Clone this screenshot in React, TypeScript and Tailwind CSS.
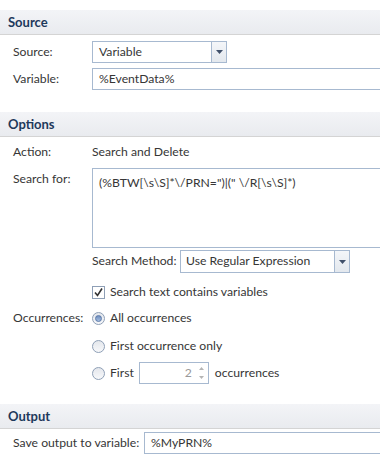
import React from "react";

const Header = ({ title }: { title: string }) => (
  <div className="h-[25px] bg-gradient-to-b from-[#f3f4f7] to-[#e9ebef] border-b border-[#d4d4d4] flex items-center pl-[8px] font-bold text-[#1e395b] text-[13px]">
    {title}
  </div>
);

const Arrow = () => (
  <div className="w-[15px] h-full border-l border-[#a7b9d0] bg-gradient-to-b from-[#f4f6f9] to-[#e3e8ee] flex items-center justify-center">
    <svg width="7" height="4" viewBox="0 0 7 4">
      <path d="M0 0 H7 L3.5 4 Z" fill="#40506a" />
    </svg>
  </div>
);

const Radio = ({ checked }: { checked?: boolean }) => (
  <div className="w-[13px] h-[13px] shrink-0 rounded-full border border-[#8e9fb6] bg-gradient-to-b from-[#e4e7ec] to-[#f7f8fa] flex items-center justify-center">
    {checked && (
      <div className="w-[7px] h-[7px] rounded-full bg-gradient-to-b from-[#6f8fbf] to-[#a4bde0] border border-[#5a78a8]" />
    )}
  </div>
);

export default function App() {
  return (
    <div className="w-[380px] h-[469px] bg-white overflow-hidden text-[12.2px] text-[#363636] font-['Lato',sans-serif] leading-none whitespace-nowrap">
      <div className="h-[10px]" />
      <Header title="Source" />
      <div className="flex items-center h-[22px] mt-[6px]">
        <div className="w-[92px] pl-[13px]">Source:</div>
        <div className="w-[135px] h-[22px] border border-[#a7b9d0] flex items-center">
          <div className="flex-1 pl-[6px]">Variable</div>
          <Arrow />
        </div>
      </div>
      <div className="flex items-center h-[22px] mt-[5px]">
        <div className="w-[92px] pl-[13px]">Variable:</div>
        <div className="flex-1 h-[22px] border border-r-0 border-[#a7b9d0] flex items-center pl-[6px]">%EventData%</div>
      </div>
      <div className="h-[22px]" />
      <Header title="Options" />
      <div className="flex items-center h-[20px] mt-[5px]">
        <div className="w-[92px] pl-[13px]">Action:</div>
        <div>Search and Delete</div>
      </div>
      <div className="flex mt-[6px]">
        <div className="w-[92px] pl-[13px] pt-[5px]">Search for:</div>
        <div className="flex-1 h-[80px] border border-r-0 border-[#a7b9d0] pl-[6px] pt-[8px]">(%BTW[\s\S]*\/PRN=")|(" \/R[\s\S]*)</div>
      </div>
      <div className="flex items-center h-[23px] mt-[2px] pl-[92px]">
        <div className="w-[88px]">Search Method:</div>
        <div className="w-[170px] h-[23px] border border-[#a7b9d0] flex items-center">
          <div className="flex-1 pl-[5px]">Use Regular Expression</div>
          <Arrow />
        </div>
      </div>
      <div className="flex items-center h-[14px] mt-[12px] pl-[92px]">
        <div className="w-[13px] h-[13px] border border-[#8e9fb6] bg-white flex items-center justify-center">
          <svg width="9" height="9" viewBox="0 0 9 9">
            <path d="M1 4.5 L3.5 7.5 L8 0.5" stroke="#333" strokeWidth="1.6" fill="none" />
          </svg>
        </div>
        <div className="ml-[5px]">Search text contains variables</div>
      </div>
      <div className="flex items-center h-[14px] mt-[12px]">
        <div className="w-[92px] pl-[13px]">Occurrences:</div>
        <Radio checked />
        <div className="ml-[5px]">All occurrences</div>
      </div>
      <div className="flex items-center h-[14px] mt-[14px] pl-[92px]">
        <Radio />
        <div className="ml-[5px]">First occurrence only</div>
      </div>
      <div className="flex items-center h-[22px] mt-[9px] pl-[92px]">
        <Radio />
        <div className="ml-[5px]">First</div>
        <div className="ml-[5px] w-[70px] h-[22px] border border-[#a7b9d0] flex items-center">
          <div className="flex-1 text-right pr-[6px] text-[#999]">2</div>
          <div className="w-[10px] flex flex-col items-center gap-[6px] pr-[2px]">
            <svg width="5" height="3" viewBox="0 0 5 3"><path d="M0 3 L2.5 0 L5 3 Z" fill="#b5b5b5" /></svg>
            <svg width="5" height="3" viewBox="0 0 5 3"><path d="M0 0 L2.5 3 L5 0 Z" fill="#b5b5b5" /></svg>
          </div>
        </div>
        <div className="ml-[6px]">occurrences</div>
      </div>
      <div className="h-[20px]" />
      <Header title="Output" />
      <div className="flex items-center h-[22px] mt-[3px]">
        <div className="w-[144px] pl-[13px]">Save output to variable:</div>
        <div className="flex-1 h-[22px] border border-r-0 border-[#a7b9d0] flex items-center pl-[6px]">%MyPRN%</div>
      </div>
    </div>
  );
}
